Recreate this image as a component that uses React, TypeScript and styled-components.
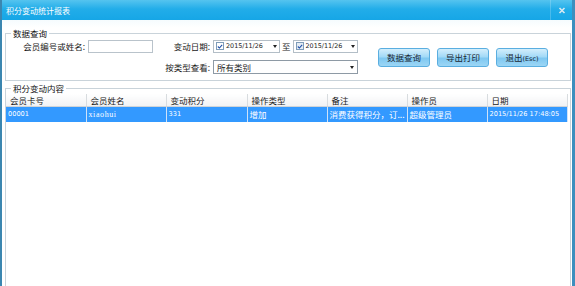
import React from 'react';
import styled, { createGlobalStyle } from 'styled-components';

const GlobalStyle = createGlobalStyle`
  html, body { margin: 0; padding: 0; background: #fff; }
  body { font-family: "Noto Sans CJK SC", "Liberation Sans", sans-serif; }
  * { box-sizing: border-box; }
`;

const Window = styled.div`
  width: 575px;
  height: 286px;
  display: flex;
  flex-direction: column;
  overflow: hidden;
  border-left: 2px solid #3b86b0;
  border-right: 3px solid #3d8fbe;
  background: linear-gradient(#cdeef9 0px, #eef9fd 14px, #ffffff 28px);
`;

const TitleBar = styled.div`
  height: 20px;
  flex: none;
  display: flex;
  align-items: center;
  justify-content: space-between;
  padding-left: 4px;
  background: linear-gradient(#55c4ef 0%, #22ade9 45%, #16a6e6 100%);
  color: #fff;
  font-size: 8px;
`;

const CloseBox = styled.div`
  width: 22px;
  height: 20px;
  display: flex;
  align-items: center;
  justify-content: center;
  border-left: 1px solid rgba(255, 255, 255, 0.2);
`;

const Body = styled.div`
  flex: 1;
  display: flex;
  flex-direction: column;
  padding: 8px 1px 0 3px;
`;

const Group = styled.fieldset<{ $grow?: boolean }>`
  margin: 0;
  padding: 0;
  border: 1px solid #c9d3da;
  ${p => p.$grow ? 'flex: 1; border-bottom: none; margin-top: 2px;' : 'height: 53px;'}
`;

const Legend = styled.legend`
  font-size: 8.5px;
  color: #111;
  padding: 0 2px;
  margin-left: 5px;
  line-height: 10px;
`;

const QueryRow = styled.div`
  display: flex;
  align-items: center;
  margin-top: 1px;
`;

const FormGrid = styled.div`
  display: grid;
  grid-template-columns: 79px 65px 54px 145px;
  grid-template-rows: 14px 14px;
  column-gap: 3px;
  row-gap: 7px;
  align-items: center;
`;

const Label = styled.label<{ $col: number; $row: number }>`
  grid-column: ${p => p.$col};
  grid-row: ${p => p.$row};
  text-align: right;
  font-size: 8.5px;
  color: #1a1a1a;
  white-space: nowrap;
`;

const TextInput = styled.input`
  grid-column: 2;
  grid-row: 1;
  width: 65px;
  height: 13px;
  border: 1px solid #b9c3cb;
  background: #fff;
  padding: 0;
`;

const DateRange = styled.div`
  grid-column: 4;
  grid-row: 1;
  display: flex;
  align-items: center;
  gap: 2px;
`;

const DateBox = styled.div<{ $w: number }>`
  width: ${p => p.$w}px;
  height: 13px;
  border: 1px solid #b3bec7;
  background: #fff;
  display: flex;
  align-items: center;
  padding: 0 2px 0 2px;
  gap: 2px;
  font-family: "DejaVu Sans", sans-serif;
  font-size: 6.4px;
  color: #222;
`;

const Check = styled.span<{ $dim?: boolean }>`
  width: 8px;
  height: 8px;
  border: 1px solid #7f9db9;
  background: ${p => (p.$dim ? '#e4ecf4' : '#fff')};
  display: flex;
  align-items: center;
  justify-content: center;
  flex: none;
`;

const Arrow = styled.span`
  margin-left: auto;
  width: 0;
  height: 0;
  border-left: 2.5px solid transparent;
  border-right: 2.5px solid transparent;
  border-top: 3px solid #222;
`;

const To = styled.span`
  font-size: 8.5px;
  color: #1a1a1a;
`;

const Select = styled.div`
  grid-column: 4;
  grid-row: 2;
  height: 14px;
  border: 1px solid #8e9aa5;
  background: #fff;
  display: flex;
  align-items: center;
  padding: 0 3px;
  font-size: 8.5px;
  color: #1a1a1a;
`;

const Buttons = styled.div`
  display: flex;
  gap: 7px;
  margin-left: 20px;
  margin-top: 2px;
`;

const Button = styled.button`
  width: 52px;
  height: 19px;
  border: 1px solid #5aaee0;
  border-radius: 3px;
  background: linear-gradient(#d3eefc 0%, #a3daf7 45%, #7fc8f1 55%, #9cd6f5 100%);
  font-family: inherit;
  font-size: 8.5px;
  line-height: 17px;
  color: #1b2733;
  padding: 0;
  text-align: center;
`;

const Small = styled.span`
  font-family: "DejaVu Sans", sans-serif;
  font-size: 6.5px;
  vertical-align: baseline;
`;

const Table = styled.table`
  width: 561px;
  margin-top: 1px;
  border-collapse: collapse;
  table-layout: fixed;
  font-size: 8.5px;
`;

const Th = styled.th`
  height: 12px;
  padding: 0 0 0 4px;
  text-align: left;
  font-weight: normal;
  color: #222;
  background: linear-gradient(#ffffff, #f1f2f4);
  border-right: 1px solid #d8dcdf;
  border-bottom: 1px solid #d0d4d8;
  white-space: nowrap;
`;

const Td = styled.td<{ $mono?: boolean }>`
  height: 15px;
  padding: 0 0 0 2px;
  background: #3399ff;
  color: #fff;
  border-right: 1px solid #cfe2f8;
  white-space: nowrap;
  overflow: hidden;
  font-family: ${p => (p.$mono ? '"DejaVu Sans", sans-serif' : 'inherit')};
  font-size: ${p => (p.$mono ? '6.6px' : '8.5px')};
`;

const SerifTd = styled(Td)`
  font-family: "Liberation Serif", serif;
  font-size: 8px;
  letter-spacing: 0.6px;
`;

const columns = ['会员卡号', '会员姓名', '变动积分', '操作类型', '备注', '操作员', '日期'];

const CheckMark = () => (
  <svg width="7" height="7" viewBox="0 0 7 7">
    <path d="M1 3.5 L2.8 5.3 L6 1.5" fill="none" stroke="#1f4fa8" strokeWidth="1.3" />
  </svg>
);

const DatePicker: React.FC<{ width: number; dim?: boolean }> = ({ width, dim }) => (
  <DateBox $w={width}>
    <Check $dim={dim}>
      <CheckMark />
    </Check>
    2015/11/26
    <Arrow />
  </DateBox>
);

export default function App() {
  return (
    <>
      <GlobalStyle />
      <Window>
        <TitleBar>
          积分变动统计报表
          <CloseBox>
            <svg width="8" height="7" viewBox="0 0 8 7">
              <path d="M1.5 1 L6.5 6 M6.5 1 L1.5 6" stroke="#d9e9f1" strokeWidth="1.6" />
            </svg>
          </CloseBox>
        </TitleBar>
        <Body>
          <Group>
            <Legend>数据查询</Legend>
            <QueryRow>
              <FormGrid>
                <Label $col={1} $row={1}>会员编号或姓名:</Label>
                <TextInput />
                <Label $col={3} $row={1}>变动日期:</Label>
                <DateRange>
                  <DatePicker width={67} />
                  <To>至</To>
                  <DatePicker width={65} dim />
                </DateRange>
                <Label $col={3} $row={2}>按类型查看:</Label>
                <Select>
                  所有类别
                  <Arrow />
                </Select>
              </FormGrid>
              <Buttons>
                <Button>数据查询</Button>
                <Button>导出打印</Button>
                <Button>退出<Small>(Esc)</Small></Button>
              </Buttons>
            </QueryRow>
          </Group>
          <Group $grow>
            <Legend>积分变动内容</Legend>
            <Table>
              <colgroup>
                <col style={{ width: 80 }} />
                <col style={{ width: 80 }} />
                <col style={{ width: 81 }} />
                <col style={{ width: 80 }} />
                <col style={{ width: 80 }} />
                <col style={{ width: 80 }} />
                <col style={{ width: 80 }} />
              </colgroup>
              <thead>
                <tr>
                  {columns.map(c => (
                    <Th key={c}>{c}</Th>
                  ))}
                </tr>
              </thead>
              <tbody>
                <tr>
                  <Td $mono>00001</Td>
                  <SerifTd>xiaohui</SerifTd>
                  <Td $mono>331</Td>
                  <Td>增加</Td>
                  <Td>消费获得积分，订...</Td>
                  <Td>超级管理员</Td>
                  <Td $mono>2015/11/26 17:48:05</Td>
                </tr>
              </tbody>
            </Table>
          </Group>
        </Body>
      </Window>
    </>
  );
}
